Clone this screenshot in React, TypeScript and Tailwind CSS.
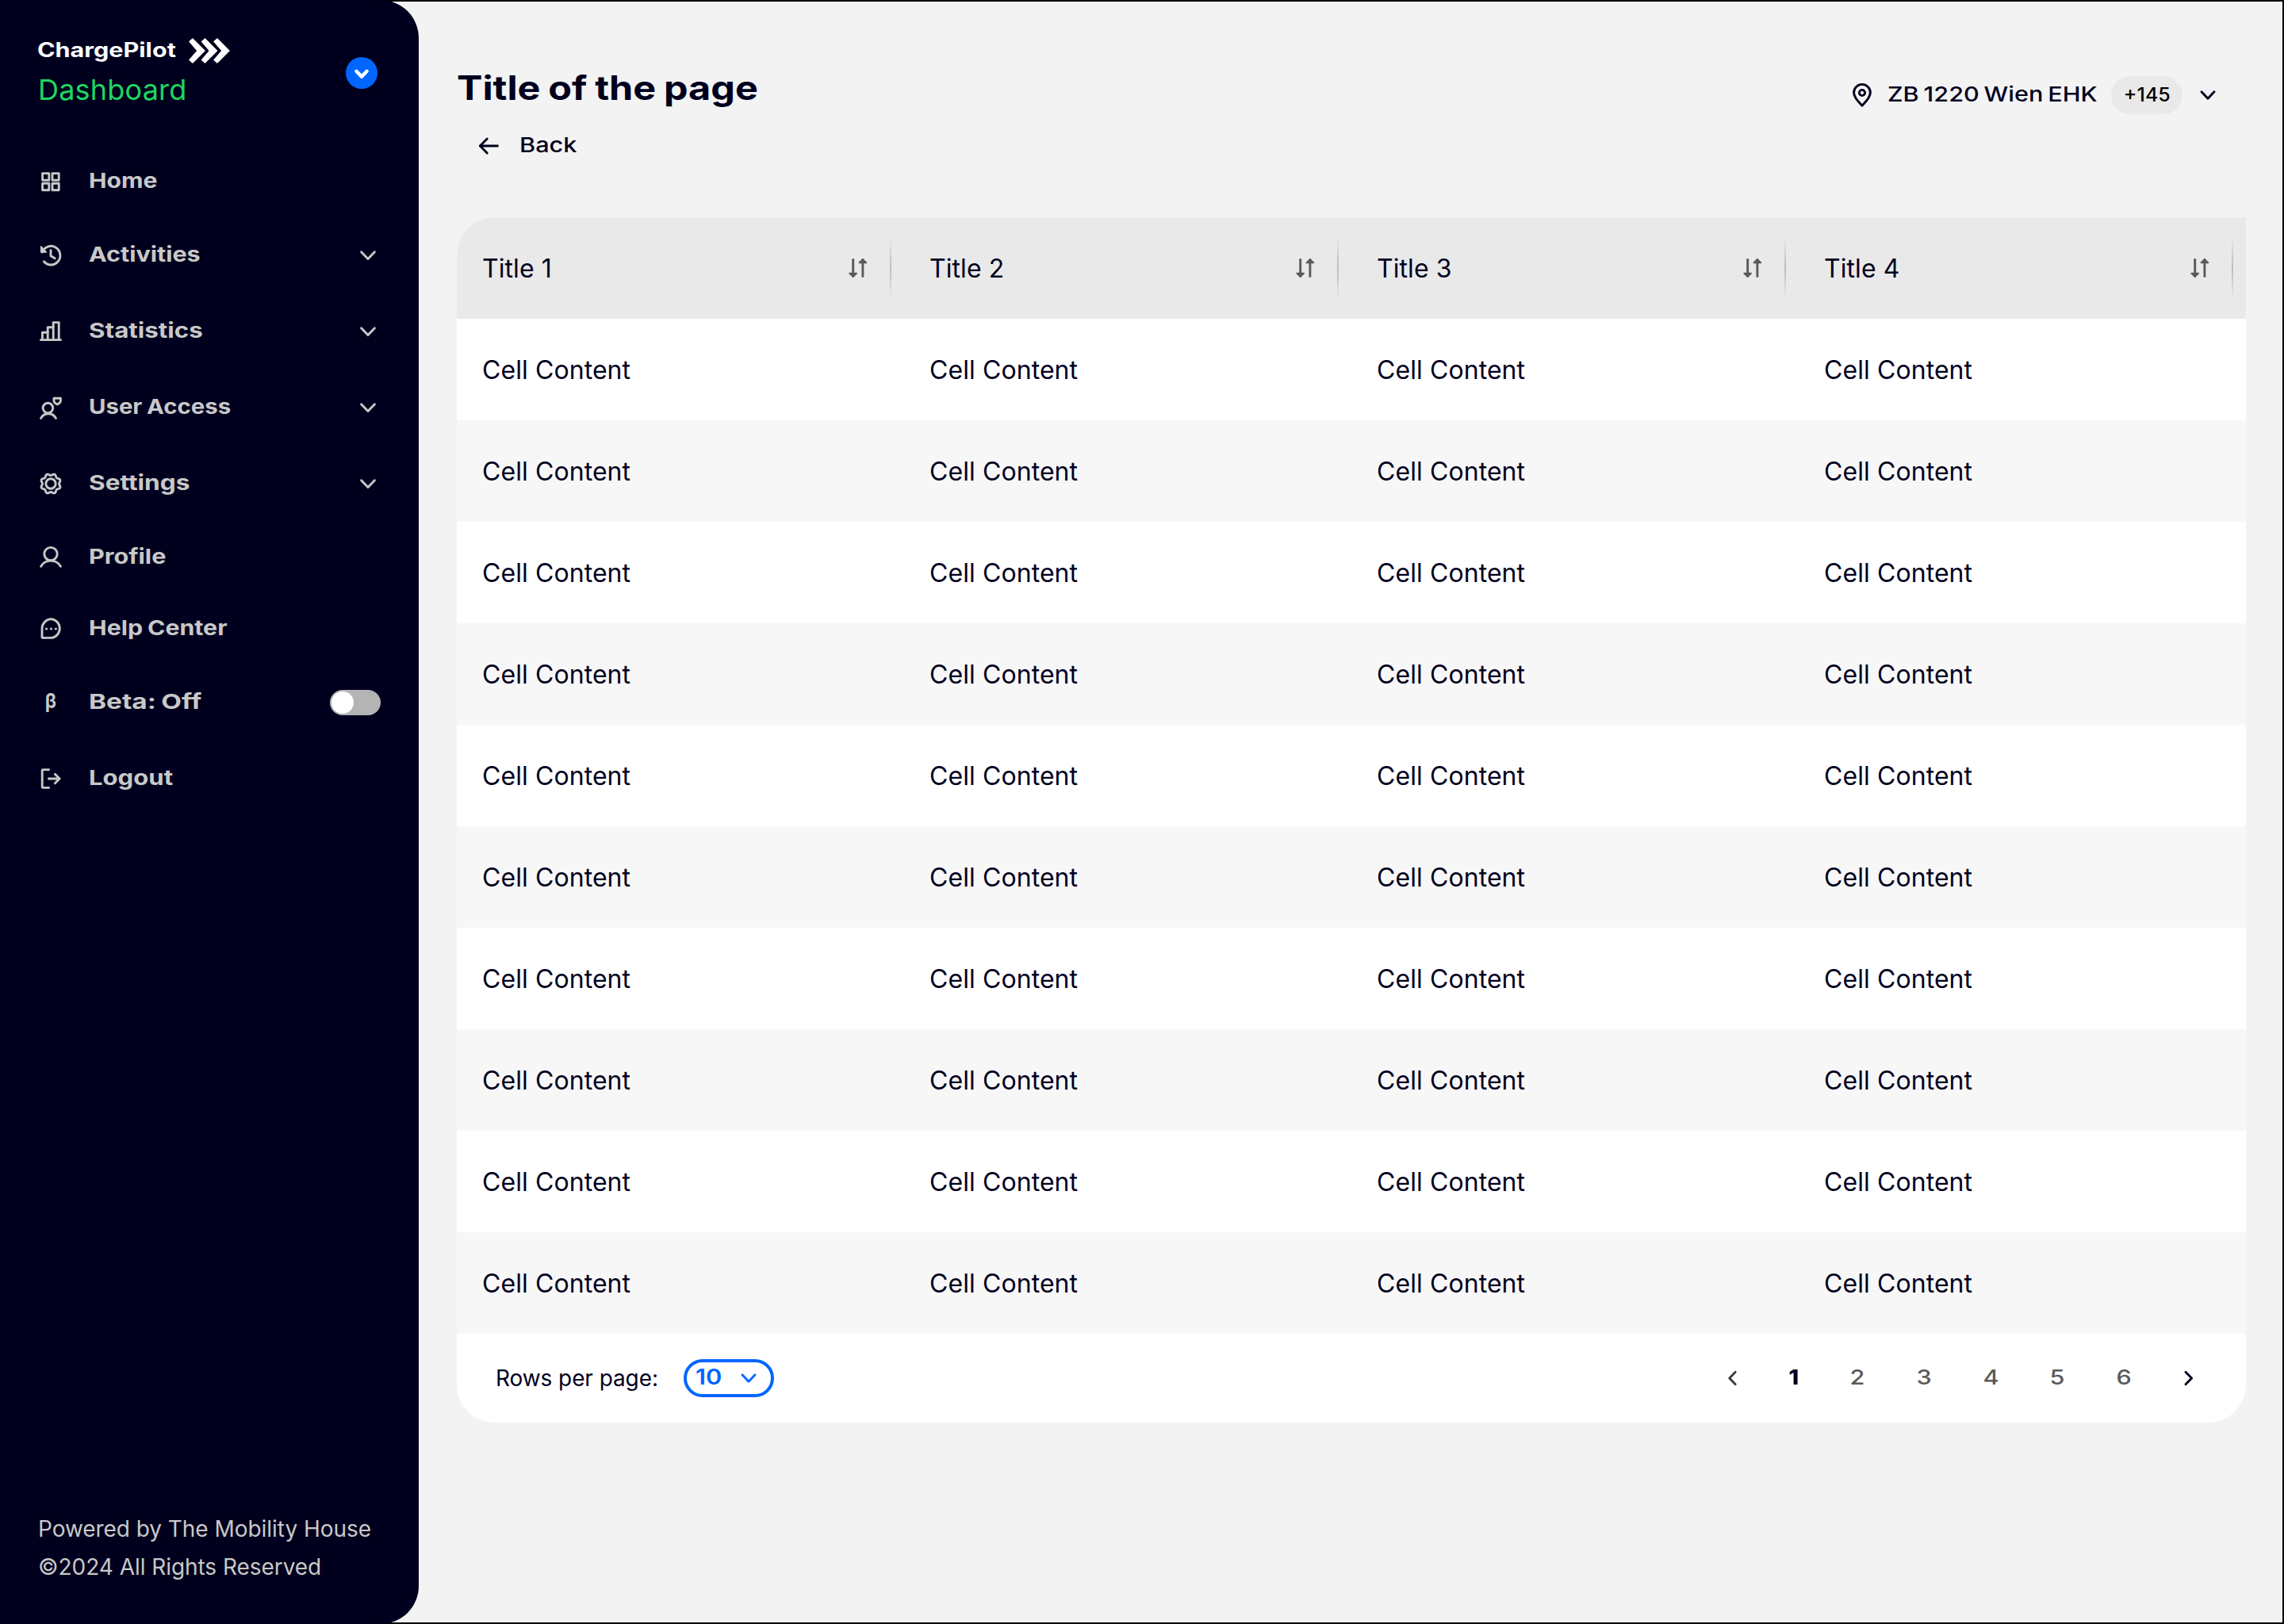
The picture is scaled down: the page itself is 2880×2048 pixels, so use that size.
import type { ReactNode } from "react";

const PAGE_FONT = "font-['Inter','Liberation_Sans',sans-serif]";

function Icon({
  children,
  className = "",
  stroke = 2.9,
}: {
  children: ReactNode;
  className?: string;
  stroke?: number;
}) {
  return (
    <svg
      viewBox="0 0 32 32"
      className={`size-8 shrink-0 ${className}`}
      fill="none"
      stroke="currentColor"
      strokeWidth={stroke}
      strokeLinecap="round"
      strokeLinejoin="round"
    >
      {children}
    </svg>
  );
}

const gearPath =
  Array.from({ length: 96 }, (_, i) => {
    const a = (i / 96) * Math.PI * 2;
    const r = 11.6 - 1.15 * Math.cos(a * 8);
    const x = 16 + r * Math.sin(a);
    const y = 16 - r * Math.cos(a);
    return `${i === 0 ? "M" : "L"}${x.toFixed(2)} ${y.toFixed(2)}`;
  }).join("") + "Z";

const HomeIcon = () => (
  <Icon>
    <rect x="5.6" y="5.6" width="8.2" height="8.6" />
    <rect x="18" y="5.6" width="8.2" height="8.6" />
    <rect x="5.6" y="18.2" width="8.2" height="8.6" />
    <rect x="18" y="18.2" width="8.2" height="8.6" />
  </Icon>
);

const ActivitiesIcon = () => (
  <Icon>
    <path d="M5.4 12A11.6 11.8 0 1 1 7.4 23.8" />
    <path d="M3.8 5V11.8H10.2Z" fill="currentColor" strokeWidth="1.8" />
    <path d="M16 9.6V16.8L21.2 19.8" />
  </Icon>
);

const StatisticsIcon = () => (
  <Icon>
    <path d="M3.4 26.6H28.6" />
    <path d="M5.4 26.6V17.2H12.2" />
    <path d="M12.2 26.6V10.8H19.2" />
    <path d="M19.2 26.6V4.6H26.2V26.6" />
  </Icon>
);

const UserAccessIcon = () => (
  <Icon>
    <circle cx="12.4" cy="16.6" r="6.3" />
    <path d="M3.6 29.4A10.7 10.7 0 0 1 22.4 29.4" />
    <path d="M20 4.2H28.4V7.8C28.4 9.8 26.4 11 24.2 12C22 11 20 9.8 20 7.8Z" />
  </Icon>
);

const SettingsIcon = () => (
  <Icon>
    <path d={gearPath} />
    <circle cx="16" cy="16" r="6.2" />
  </Icon>
);

const ProfileIcon = () => (
  <Icon>
    <circle cx="16" cy="12.6" r="8.2" />
    <path d="M3.6 28.2A14.4 14.4 0 0 1 28.4 28.2" />
  </Icon>
);

const HelpIcon = () => (
  <Icon>
    <path d="M16.8 4.6A12 12 0 0 1 16.8 28.4H6.2A1.2 1.2 0 0 1 5 27.2V16.5A12 12 0 0 1 16.8 4.6Z" />
    <g fill="currentColor" stroke="none">
      <circle cx="10.6" cy="17" r="1.6" />
      <circle cx="16.5" cy="17" r="1.6" />
      <circle cx="22.4" cy="17" r="1.6" />
    </g>
  </Icon>
);

const BetaIcon = () => (
  <span className="flex size-8 items-center justify-center pb-1 text-[26px] leading-8 font-bold">
    <span className="inline-block scale-x-90">β</span>
  </span>
);

const LogoutIcon = () => (
  <Icon>
    <path d="M13.6 4.6H6.2A1 1 0 0 0 5.2 5.6V26.4A1 1 0 0 0 6.2 27.4H13.6" />
    <path d="M13.4 16H27" />
    <path d="M21.4 10.2L27 16L21.4 21.8" />
  </Icon>
);

const ChevronDown = ({ className = "" }: { className?: string }) => (
  <Icon className={className}>
    <path d="M8 11.8L16 20.2L24 11.8" />
  </Icon>
);

const NavChevron = () => (
  <Icon>
    <path d="M7.6 11.8L16 20.4L24.4 11.8" />
  </Icon>
);

const SortIcon = () => (
  <Icon className="text-[#5a5a5a]">
    <path d="M9.7 5.4V26.6" />
    <path d="M5.4 22.8L9.7 26.8L14 22.8Z" fill="currentColor" strokeWidth="2" />
    <path d="M21.9 26.6V5.4" />
    <path d="M17.6 9.2L21.9 5.2L26.2 9.2Z" fill="currentColor" strokeWidth="2" />
  </Icon>
);

type NavItem = {
  label: string;
  icon: ReactNode;
  height: string;
  stretch: string;
  lift?: string;
  trailing?: "chevron" | "toggle";
};

const navItems: NavItem[] = [
  { label: "Home", icon: <HomeIcon />, height: "h-[90px]", stretch: "scale-x-[1.158]" },
  { label: "Activities", icon: <ActivitiesIcon />, height: "h-24", stretch: "scale-x-[1.173]", trailing: "chevron" },
  { label: "Statistics", icon: <StatisticsIcon />, height: "h-24", stretch: "scale-x-[1.205]", trailing: "chevron" },
  { label: "User Access", icon: <UserAccessIcon />, height: "h-24", stretch: "scale-x-[1.128]", trailing: "chevron" },
  { label: "Settings", icon: <SettingsIcon />, height: "h-24", stretch: "scale-x-[1.215]", trailing: "chevron" },
  { label: "Profile", icon: <ProfileIcon />, height: "h-[88px]", stretch: "scale-x-[1.174]", lift: "pb-px" },
  { label: "Help Center", icon: <HelpIcon />, height: "h-[92px]", stretch: "scale-x-[1.165]", lift: "pb-px" },
  { label: "Beta: Off", icon: <BetaIcon />, height: "h-24", stretch: "scale-x-[1.282]", trailing: "toggle" },
  { label: "Logout", icon: <LogoutIcon />, height: "h-24", stretch: "scale-x-[1.195]" },
];

function Sidebar() {
  return (
    <aside className="-my-0.5 flex h-[2048px] w-[528px] shrink-0 flex-col rounded-r-[48px] bg-[#00001e] px-12 text-[#c8c8c8]">
      <div className="flex h-[184px] shrink-0 items-start justify-between pt-[46px]">
        <div>
          <div className="flex h-9 items-center">
            <span className="-ml-px w-[191px] pb-[3px] text-[25px] leading-8 font-bold text-white">
              <span className="inline-block origin-left scale-x-[1.222]">ChargePilot</span>
            </span>
            <svg viewBox="0 0 52 32" className="h-8 w-[52px]" fill="white" stroke="white" strokeWidth="1" strokeLinejoin="round">
              {[0, 15.5, 31].map((x) => (
                <path key={x} transform={`translate(${x} 0)`} d="M5 .6L20.4 16L5 31.4L.6 27.6L10.6 16L.6 4.4Z" />
              ))}
            </svg>
          </div>
          <div className="mt-[7px] text-[36px] leading-[48px] tracking-[0.2px] text-[#1ed760]">Dashboard</div>
        </div>
        <button className="mt-[26px] mr-1 flex size-10 items-center justify-center rounded-full bg-[#0066ff] text-white">
          <Icon stroke={4.4}>
            <path d="M9.4 13.8L16 20.6L22.6 13.8" />
          </Icon>
        </button>
      </div>
      <nav className="flex flex-col">
        {navItems.map((item) => (
          <a key={item.label} className={`flex items-center ${item.height}`}>
            {item.icon}
            <span className={`ml-8 flex-1 text-[26px] leading-8 font-bold [word-spacing:-1px] ${item.lift ?? "pb-[3px]"}`}>
              <span className={`inline-block origin-left ${item.stretch}`}>{item.label}</span>
            </span>
            {item.trailing === "chevron" && <NavChevron />}
            {item.trailing === "toggle" && (
              <span className="flex h-8 w-16 rounded-full bg-[#b4b4b4] p-0.5">
                <span className="size-7 rounded-full bg-white" />
              </span>
            )}
          </a>
        ))}
      </nav>
      <div className="mt-auto pb-12 text-[28px] leading-[48px] tracking-[-0.05px]">
        <p className="whitespace-nowrap">Powered by The Mobility House</p>
        <p className="whitespace-nowrap">©2024 All Rights Reserved</p>
      </div>
    </aside>
  );
}

function PageHeader() {
  return (
    <header className="flex h-[272px] shrink-0 items-start justify-between pt-[79px]">
      <div>
        <h1 className="text-[42px] leading-[60px] font-bold whitespace-nowrap [word-spacing:-1.5px]">
          <span className="inline-block origin-left scale-x-[1.156]">Title of the page</span>
        </h1>
        <a className="mt-[11px] flex h-16 items-center pl-6">
          <Icon>
            <path d="M27.4 16H5.4" />
            <path d="M14.2 7L5.4 16L14.2 25" />
          </Icon>
          <span className="ml-[23px] pb-[3px] text-[26px] leading-8 font-medium">
            <span className="inline-block origin-left scale-x-[1.18]">Back</span>
          </span>
        </a>
      </div>
      <div className="mt-[15px] mr-8 flex h-12 items-center">
        <Icon>
          <path d="M16 29.2C12 24.8 5.6 19.4 5.6 12.8A10.4 10.4 0 0 1 26.4 12.8C26.4 19.4 20 24.8 16 29.2Z" />
          <circle cx="16" cy="13" r="3.6" />
        </Icon>
        <span className="ml-4 w-[264px] pb-[3px] text-[26px] leading-8 font-medium whitespace-nowrap [word-spacing:-2px]">
          <span className="inline-block origin-left scale-x-[1.178]">ZB 1220 Wien EHK</span>
        </span>
        <span className="ml-[18px] flex h-12 w-[90px] items-center justify-center rounded-full bg-[#e9e9e9] text-2xl font-medium text-black">
          <span className="inline-block scale-x-[1.04]">+145</span>
        </span>
        <ChevronDown className="ml-4" />
      </div>
    </header>
  );
}

const columns = ["Title 1", "Title 2", "Title 3", "Title 4"];
const rows = Array.from({ length: 10 }, () => columns.map(() => "Cell Content"));

function DataTable() {
  return (
    <section className="w-[2256px] overflow-hidden rounded-tl-[48px] rounded-b-[48px] bg-white text-[32px] tracking-[0.08px]">
      <div className="grid h-32 grid-cols-4 bg-[#e9e9e9]">
        {columns.map((title) => (
          <div key={title} className="flex items-center pr-4 pl-8">
            <span className="flex-1 pt-0.5">{title}</span>
            <SortIcon />
            <span className="ml-6 h-20 w-0.5 bg-linear-to-b from-transparent via-[#bcbcbc] to-transparent" />
          </div>
        ))}
      </div>
      {rows.map((cells, r) => (
        <div key={r} className="grid h-32 grid-cols-4 odd:bg-[#f7f7f7] even:bg-white">
          {cells.map((cell, c) => (
            <div key={c} className="flex items-center px-8 pt-0.5">
              {cell}
            </div>
          ))}
        </div>
      ))}
      <div className="flex h-28 items-center bg-white pr-[33px] pl-12">
        <span className="w-[206px] pl-px text-[28px] tracking-[-0.08px] whitespace-nowrap">Rows per page:</span>
        <button className="ml-8 flex h-12 w-[114px] items-center rounded-full border-4 border-[#0066ff] pl-[11px] text-[#0066ff]">
          <span className="w-[33px] pb-[3px] text-left text-[27px] leading-8 font-semibold">
            <span className="inline-block origin-left scale-x-[1.14]">10</span>
          </span>
          <ChevronDown className="ml-[18px]" />
        </button>
        <div className="ml-auto flex items-center text-[26px] font-medium text-[#5a5a5a]">
          <span className="flex w-[78px] justify-center text-[#3c3c3c]">
            <Icon>
              <path d="M20.2 8.2L12.8 16L20.2 23.8" />
            </Icon>
          </span>
          <span className="flex w-[78px] justify-center pb-[3px] font-extrabold text-[#00001e]">
            <span className="inline-block scale-x-[1.1]">1</span>
          </span>
          {[2, 3, 4, 5, 6].map((n) => (
            <span key={n} className="flex w-[84px] justify-center pr-px pb-[3px]">
              <span className="inline-block scale-x-[1.18]">{n}</span>
            </span>
          ))}
          <span className="flex w-[78px] justify-center text-[#00001e]">
            <Icon>
              <path d="M12 8.2L19.6 16L12 23.8" />
            </Icon>
          </span>
        </div>
      </div>
    </section>
  );
}

export default function App() {
  return (
    <div
      className={`flex h-[2048px] w-[2880px] border-y-2 border-r-2 border-black bg-[#f3f3f3] text-[#00001e] ${PAGE_FONT}`}
    >
      <Sidebar />
      <main className="flex flex-1 flex-col pr-[46px] pl-12">
        <PageHeader />
        <DataTable />
      </main>
    </div>
  );
}
